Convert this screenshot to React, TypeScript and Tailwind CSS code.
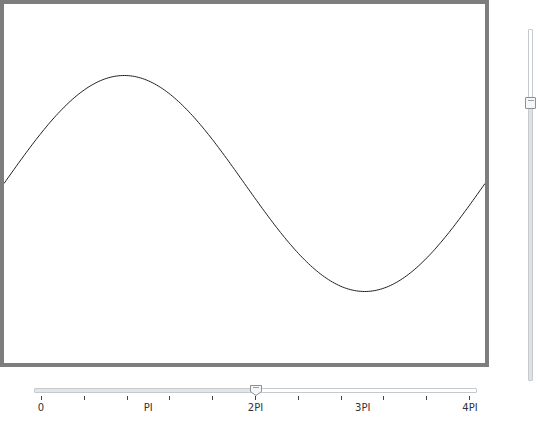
import React from 'react'

const W = 481
const H = 359

function sinePath() {
  const pts: string[] = []
  for (let i = 0; i <= 240; i++) {
    const x = (i / 240) * W
    const y = H / 2 - Math.sin((i / 240) * Math.PI * 2) * 108
    pts.push(`${i === 0 ? 'M' : 'L'}${x.toFixed(2)} ${y.toFixed(2)}`)
  }
  return pts.join(' ')
}

const LABELS = ['0', 'PI', '2PI', '3PI', '4PI']

export default function App() {
  return (
    <div className="w-[540px] h-[421px] bg-white flex font-['DejaVu_Sans',sans-serif] text-[#333]">
      <div className="w-[489px] flex flex-col">
        {/* plot frame */}
        <div className="w-[489px] h-[367px] border-4 border-[#7d7d7d] bg-white">
          <svg width={W} height={H} viewBox={`0 0 ${W} ${H}`} className="block">
            <path d={sinePath()} fill="none" stroke="#222" strokeWidth="1" />
          </svg>
        </div>

        {/* horizontal slider */}
        <div className="ml-[34px] w-[443px] mt-[21px] relative">
          <div className="h-[5px] flex border border-[#c6cacd] rounded-[1px] bg-white">
            <div className="w-[222px] bg-[#e3e6e8]" />
          </div>
          <div className="absolute left-[216px] top-[-3px] w-[12px] h-[11px]">
            <svg width="12" height="11" viewBox="0 0 12 11">
              <path d="M0.5 0.5 H11.5 V6.5 L6 10.5 L0.5 6.5 Z" fill="#f4f6f7" stroke="#8a9094" />
              <path d="M3 2.5 H9" stroke="#9aa0a4" />
            </svg>
          </div>
          <div className="mx-[7px] mt-[3px] flex justify-between h-[4px]">
            {[...Array(11)].map((_, i) => (
              <div key={i} className="w-px h-[4px] bg-[#444]" />
            ))}
          </div>
          <div className="mx-[7px] mt-[2px] relative h-[12px]">
            <div className="flex justify-between text-[10px] leading-[12px]">
              {LABELS.map(l => (
                <div key={l} className="w-0 flex justify-center">
                  <span className="whitespace-nowrap">{l}</span>
                </div>
              ))}
            </div>
          </div>
        </div>
      </div>

      {/* vertical slider */}
      <div className="ml-[39px] mt-[29px] relative">
        <div className="w-[5px] h-[352px] flex flex-col border border-[#c6cacd] rounded-[1px] bg-white">
          <div className="h-[72px]" />
          <div className="flex-1 bg-[#dbe3e9]" />
        </div>
        <div className="absolute left-[-3px] top-[68px] w-[11px] h-[12px] border border-[#8a9094] bg-[#f4f6f7] rounded-[1px] flex justify-center">
          <div className="mt-[2px] w-[6px] h-px bg-[#9aa0a4]" />
        </div>
      </div>
    </div>
  )
}
